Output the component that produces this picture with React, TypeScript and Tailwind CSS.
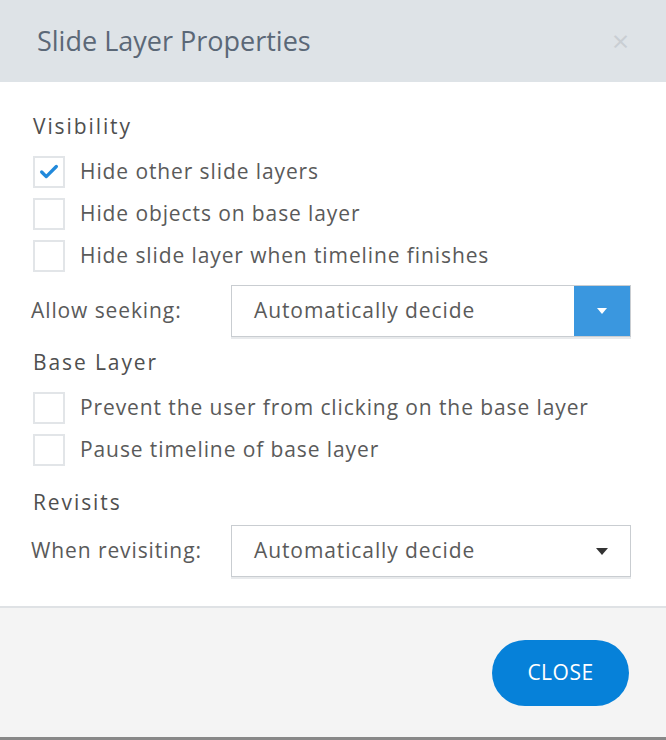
import { Check } from "lucide-react";

function Checkbox({ checked }: { checked?: boolean }) {
  return (
    <div className="flex h-[32px] w-[32px] shrink-0 items-center justify-center border-2 border-[#e2e5e8] bg-white">
      {checked && <Check className="h-[22px] w-[22px] text-[#2189db]" strokeWidth={3.6} />}
    </div>
  );
}

function Row({ label, checked }: { label: string; checked?: boolean }) {
  return (
    <div className="flex h-[42px] items-center gap-[15px]">
      <Checkbox checked={checked} />
      <span>{label}</span>
    </div>
  );
}

function Select({ blue }: { blue?: boolean }) {
  return (
    <div className="flex h-[52px] w-[400px] border border-[#c9cdd1] bg-white shadow-[0_2px_0_#e8eaec]">
      <div className="flex flex-1 items-center pl-[22px]">Automatically decide</div>
      {blue ? (
        <div className="flex w-[56px] items-center justify-center bg-[#3a97df]">
          <svg width="10" height="6" viewBox="0 0 10 6">
            <path d="M0 0h10L5 6z" fill="#fff" />
          </svg>
        </div>
      ) : (
        <div className="flex w-[56px] items-center justify-center">
          <svg width="12" height="7" viewBox="0 0 12 7">
            <path d="M0 0h12L6 7z" fill="#333" />
          </svg>
        </div>
      )}
    </div>
  );
}

function Heading({ children, className = "" }: { children: string; className?: string }) {
  return (
    <div className={`flex h-[34px] items-center text-[21px] tracking-[1.9px] text-[#4f4f4f] ${className}`}>
      {children}
    </div>
  );
}

export default function App() {
  return (
    <div
      className="flex h-[740px] w-[666px] flex-col bg-white text-[21px] tracking-[0.9px] text-[#5a5a5a]"
      style={{ fontFamily: '"Open Sans", "Noto Sans", sans-serif' }}
    >
      <div className="flex h-[82px] shrink-0 items-center justify-between bg-[#dee3e7] pl-[37px] pr-[36px]">
        <span className="text-[27px] tracking-normal text-[#5b6877]">Slide Layer Properties</span>
        <span className="text-[30px] leading-none text-[#c9ced3]">×</span>
      </div>

      <div className="flex flex-1 flex-col px-[33px] pt-[28px]">
        <Heading>Visibility</Heading>
        <div className="mt-[7px]">
          <Row label="Hide other slide layers" checked />
          <Row label="Hide objects on base layer" />
          <Row label="Hide slide layer when timeline finishes" />
        </div>
        <div className="mt-[8px] flex items-center">
          <span className="-ml-[2px] w-[200px]">Allow seeking:</span>
          <Select blue />
        </div>
        <Heading className="mt-[9px]">Base Layer</Heading>
        <div className="mt-[7px]">
          <Row label="Prevent the user from clicking on the base layer" />
          <Row label="Pause timeline of base layer" />
        </div>
        <Heading className="mt-[15px]">Revisits</Heading>
        <div className="mt-[5px] flex items-center">
          <span className="-ml-[2px] w-[200px]">When revisiting:</span>
          <Select />
        </div>
      </div>

      <div className="flex h-[131px] shrink-0 items-center justify-end border-t-2 border-[#dfe2e5] bg-[#f4f4f4] pr-[37px]">
        <button className="h-[66px] w-[137px] rounded-full bg-[#0681d9] text-[21px] tracking-[0.5px] text-white">
          CLOSE
        </button>
      </div>
      <div className="h-[3px] shrink-0 bg-[#888]" />
    </div>
  );
}
